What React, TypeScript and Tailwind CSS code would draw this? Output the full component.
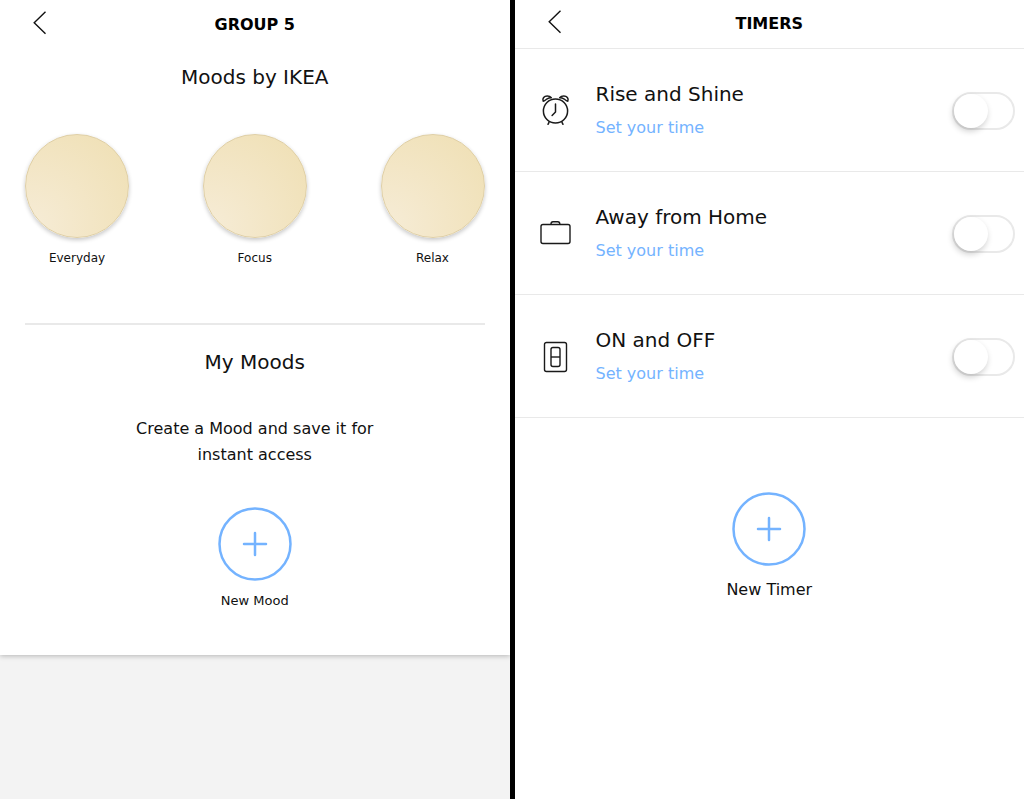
import type { ReactNode } from "react";

function Header({ title, divided = false }: { title: string; divided?: boolean }) {
  return (
    <header
      className={
        divided
          ? "grid h-[49px] grid-cols-[80px_1fr_80px] items-center border-b border-[#e9e9e9]"
          : "grid h-[49px] grid-cols-[80px_1fr_80px] items-center"
      }
    >
      <button type="button" aria-label="Back" className="flex h-11 items-center pb-1 pl-8">
        <svg width="16" height="24" viewBox="0 0 16 24" fill="none" stroke="#111" strokeWidth="1.4">
          <path d="M13.5 0.8 2.2 11.7 13.5 22.8" />
        </svg>
      </button>
      <h1 className="text-center text-base font-bold text-black">{title}</h1>
    </header>
  );
}

function AddButton({ label, labelClass }: { label: string; labelClass: string }) {
  return (
    <button type="button" className="flex flex-col items-center">
      <svg width="74" height="74" viewBox="0 0 74 74" fill="none" stroke="#74b3ff" strokeWidth="2.5">
        <circle cx="37" cy="37" r="35.5" />
        <path d="M37 26v22M26 37h22" strokeLinecap="round" />
      </svg>
      <span className={labelClass}>{label}</span>
    </button>
  );
}

function AlarmIcon() {
  return (
    <svg width="32" height="32" viewBox="0 0 32 32" fill="none" stroke="#1a1a1a" strokeWidth="1.5" strokeLinecap="round" strokeLinejoin="round">
      <circle cx="16.5" cy="16" r="12.1" />
      <path d="M16.5 9v8l-3.400 3.500" />
      <path d="M10 27.300 9 29.300M23 27.300l1 2" />
      <path d="M4.200 6.300C3 3.300 5.200 1 8.200 1c1.900 0 3.300.7 4.100 1.800-1.700 0-3.200.5-4.600 1.300-1.200.7-2 2.100-3.500 2.200Z" />
      <path d="M28.800 6.300C30 3.300 27.800 1 24.800 1c-1.900 0-3.300.7-4.100 1.800 1.700 0 3.200.5 4.600 1.300 1.200.7 2 2.100 3.500 2.200Z" />
    </svg>
  );
}

function CaseIcon() {
  return (
    <svg width="32" height="32" viewBox="0 0 32 32" fill="none" stroke="#1a1a1a" strokeWidth="1.400">
      <rect x="2" y="6.500" width="29" height="19" rx="2" />
      <path d="M12 6.500V6C12 4.500 12.800 3.700 14 3.700h4.800c1.200 0 2 .8 2 2.300v.5" />
    </svg>
  );
}

function SwitchIcon() {
  return (
    <svg width="32" height="32" viewBox="0 0 32 32" fill="none" stroke="#1a1a1a" strokeWidth="1.400">
      <rect x="5.500" y="1.500" width="22" height="29" rx="2" />
      <rect x="12" y="6.500" width="9" height="19" rx="2" />
      <path d="M12 16h9" />
    </svg>
  );
}

const moods = ["Everyday", "Focus", "Relax"];

const timers: { id: string; title: string; icon: ReactNode }[] = [
  { id: "rise", title: "Rise and Shine", icon: <AlarmIcon /> },
  { id: "away", title: "Away from Home", icon: <CaseIcon /> },
  { id: "onoff", title: "ON and OFF", icon: <SwitchIcon /> },
];

function MoodsScreen() {
  return (
    <main className="bg-[#f3f3f3]">
      <div className="bg-white pb-[42px] shadow-[0_1px_5px_rgba(0,0,0,0.25)]">
        <Header title="GROUP 5" />
        <section className="px-[25px]">
          <h2 className="pt-3 text-center text-xl leading-8">Moods by IKEA</h2>
          <div className="mt-[41px] flex justify-between border-b-2 border-[#e9e9e9] pb-[53px]">
            {moods.map((mood) => (
              <button key={mood} type="button" className="flex flex-col items-center">
                <span className="size-[104px] rounded-full border border-[#dfcfa6] bg-[radial-gradient(circle_at_5%_90%,#f6ecd6_0%,#f3e6c6_45%,#f0e1b8_85%)] shadow-[0_2px_4px_rgba(0,0,0,0.22)]" />
                <span className="mt-2 text-xs leading-6">{mood}</span>
              </button>
            ))}
          </div>
        </section>
        <section className="flex flex-col items-center">
          <h2 className="mt-[21px] text-xl leading-8">My Moods</h2>
          <p className="mt-[38px] mb-[39px] w-[280px] text-center text-base leading-[26px]">
            Create a Mood and save it for instant access
          </p>
          <AddButton label="New Mood" labelClass="mt-2 text-[13px] leading-6" />
        </section>
      </div>
    </main>
  );
}

function TimersScreen() {
  return (
    <main className="bg-white">
      <Header title="TIMERS" divided />
      <ul>
        {timers.map(({ id, title, icon }) => (
          <li key={id} className="flex items-center border-b border-[#e9e9e9] pt-[29px] pr-[9px] pb-[27px] pl-6">
            {icon}
            <label htmlFor={id} className="ml-[25px] flex-1">
              <span className="block text-xl leading-[33px]">{title}</span>
              <span className="block text-base leading-[33px] text-[#74b3ff]">Set your time</span>
            </label>
            <input
              id={id}
              type="checkbox"
              role="switch"
              className="flex h-[38px] w-[63px] cursor-pointer appearance-none items-center rounded-full border-[2px] border-[#e9e9e9] bg-white before:size-[34px] before:rounded-full before:bg-white before:shadow-[-1px_3px_6px_rgba(0,0,0,0.2)] before:transition-transform checked:bg-[#74b3ff] checked:before:translate-x-[25px]"
            />
          </li>
        ))}
      </ul>
      <div className="flex justify-center pt-[74px]">
        <AddButton label="New Timer" labelClass="mt-2.5 text-base leading-7" />
      </div>
    </main>
  );
}

export default function App() {
  return (
    <div className="grid min-h-screen grid-cols-[1fr_5px_1fr] bg-black font-['Verdana','DejaVu_Sans',sans-serif] text-[#111]">
      <MoodsScreen />
      <div />
      <TimersScreen />
    </div>
  );
}
